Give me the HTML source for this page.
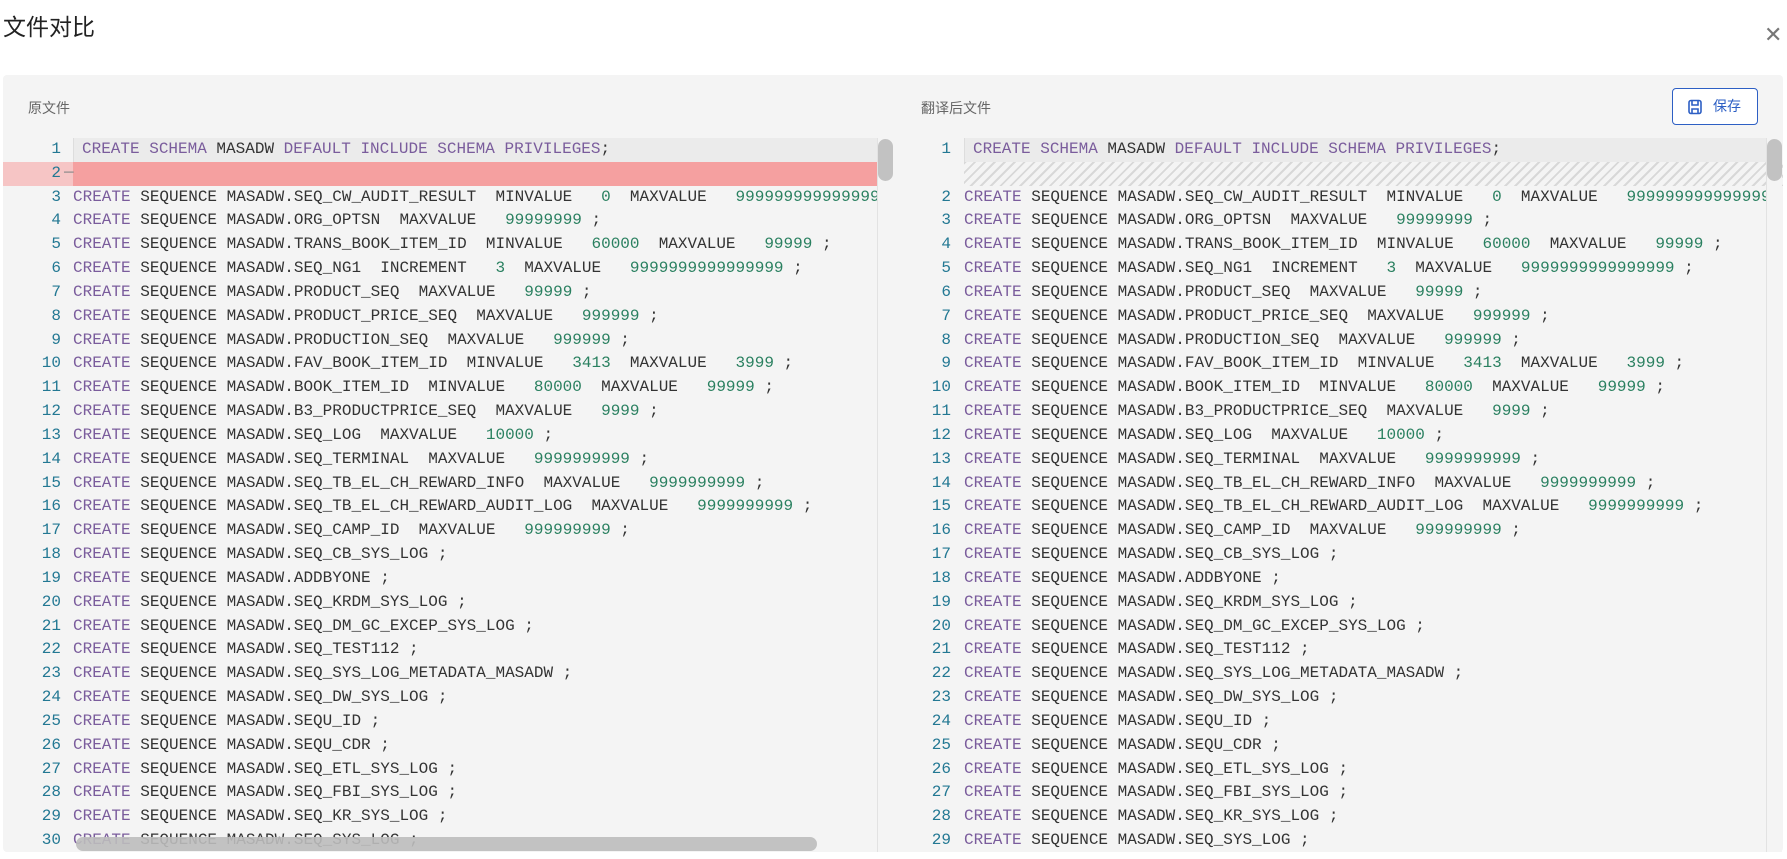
<!DOCTYPE html>
<html><head><meta charset="utf-8"><style>
*{margin:0;padding:0;box-sizing:border-box}
body{width:1787px;height:859px;background:#fff;position:relative;overflow:hidden;font-family:"Liberation Sans","Noto Sans CJK SC",sans-serif}
.title{position:absolute;left:3px;top:8px;font-size:23px;color:#222}
.close{position:absolute;left:1764px;top:22px;font-size:22px;color:#777}
.panel{position:absolute;left:3px;top:75px;width:1780px;height:777px;background:#f4f4f4;border-radius:4px}
.lbl{position:absolute;top:98px;font-size:14px;color:#666}
.btn{position:absolute;left:1672px;top:88px;width:86px;height:37px;border:1px solid #2d5fc4;border-radius:4px;color:#2d5fc4;font-size:14px;background:#fff;line-height:35px;padding-left:40px}
.ed{position:absolute;top:138px;overflow:hidden;height:714px}
.ln{position:absolute;height:23.83px;line-height:23.83px;font-family:"Liberation Mono",monospace;font-size:16px;white-space:pre;color:#333}
.n{position:absolute;width:40px;text-align:right;color:#237893}
.k{color:#7a5c9c}.g{color:#2a8060}
</style></head><body>
<div class="title">文件对比</div>
<div class="close">✕</div>
<div class="panel"></div>
<div class="lbl" style="left:28px">原文件</div>
<div class="lbl" style="left:921px">翻译后文件</div>
<div class="btn"><svg style="position:absolute;left:14px;top:10px" width="16" height="16" viewBox="0 0 16 16" fill="none" stroke="#2d5fc4" stroke-width="1.6"><rect x="2" y="1.5" width="12" height="13" rx="2"/><path d="M5 2v4h6V2M5 14v-4h6v4"/></svg>保存</div>
<div id="L" class="ed" style="left:3px;width:890px"></div>
<div id="R" class="ed" style="left:897px;width:886px"></div>
<script>
const rows=[
["MASADW.SEQ_CW_AUDIT_RESULT","MINVALUE","0","MAXVALUE","9999999999999999"],
["MASADW.ORG_OPTSN","MAXVALUE","99999999",";"],
["MASADW.TRANS_BOOK_ITEM_ID","MINVALUE","60000","MAXVALUE","99999",";"],
["MASADW.SEQ_NG1","INCREMENT","3","MAXVALUE","9999999999999999",";"],
["MASADW.PRODUCT_SEQ","MAXVALUE","99999",";"],
["MASADW.PRODUCT_PRICE_SEQ","MAXVALUE","999999",";"],
["MASADW.PRODUCTION_SEQ","MAXVALUE","999999",";"],
["MASADW.FAV_BOOK_ITEM_ID","MINVALUE","3413","MAXVALUE","3999",";"],
["MASADW.BOOK_ITEM_ID","MINVALUE","80000","MAXVALUE","99999",";"],
["MASADW.B3_PRODUCTPRICE_SEQ","MAXVALUE","9999",";"],
["MASADW.SEQ_LOG","MAXVALUE","10000",";"],
["MASADW.SEQ_TERMINAL","MAXVALUE","9999999999",";"],
["MASADW.SEQ_TB_EL_CH_REWARD_INFO","MAXVALUE","9999999999",";"],
["MASADW.SEQ_TB_EL_CH_REWARD_AUDIT_LOG","MAXVALUE","9999999999",";"],
["MASADW.SEQ_CAMP_ID","MAXVALUE","999999999",";"],
["MASADW.SEQ_CB_SYS_LOG",";"],["MASADW.ADDBYONE",";"],["MASADW.SEQ_KRDM_SYS_LOG",";"],
["MASADW.SEQ_DM_GC_EXCEP_SYS_LOG",";"],["MASADW.SEQ_TEST112",";"],["MASADW.SEQ_SYS_LOG_METADATA_MASADW",";"],
["MASADW.SEQ_DW_SYS_LOG",";"],["MASADW.SEQU_ID",";"],["MASADW.SEQU_CDR",";"],["MASADW.SEQ_ETL_SYS_LOG",";"],
["MASADW.SEQ_FBI_SYS_LOG",";"],["MASADW.SEQ_KR_SYS_LOG",";"],["MASADW.SEQ_SYS_LOG",";"]];
function fmt(r){let s='<span class="k">CREATE</span> SEQUENCE '+r[0];
for(let i=1;i<r.length;i++){let t=r[i];if(/^\d+$/.test(t))s+='   <span class="g">'+t+'</span>';else if(t==';')s+=' ;';else s+='  '+t;}
return s;}
const H=23.83;
function build(id,right){let el=document.getElementById(id),h='';
const nx=right?14:18, cx=right?67:70;
h+=`<div style="position:absolute;left:${cx}px;top:0;width:${right?803:804}px;height:${H}px;background:#ebebeb;border-left:1px solid #ddd"></div>`;
h+=`<div class="ln" style="top:0;left:0"><span class="n" style="left:${nx}px">1</span><span style="position:absolute;left:${cx+9}px"><span class="k">CREATE SCHEMA</span> MASADW <span class="k">DEFAULT INCLUDE SCHEMA PRIVILEGES</span>;</span></div>`;
if(!right){h+=`<div style="position:absolute;left:0;top:${H}px;width:890px;height:${H}px;background:#f5a0a0"></div><div style="position:absolute;left:0;top:${H}px;width:70px;height:${H}px;background:#f6c5c5"></div>`;
h+=`<div class="ln" style="top:${H}px"><span class="n" style="left:${nx}px">2</span><span style="position:absolute;left:61px;color:#888">─</span></div>`;}
else h+=`<div style="position:absolute;left:${cx}px;top:${H}px;width:820px;height:${H}px;background:repeating-linear-gradient(-45deg,#d8d8d8 0 2px,#f4f4f4 2px 7px)"></div>`;
rows.forEach((r,i)=>{const y=(i+2)*H;const n=right?i+2:i+3;
h+=`<div class="ln" style="top:${y}px"><span class="n" style="left:${nx}px">${n}</span><span style="position:absolute;left:${cx}px">${fmt(r)}</span></div>`;});
h+=`<div style="position:absolute;left:${right?869:874}px;top:0;width:16px;height:714px;border-left:1px solid #e2e2e2;background:#f4f4f4"></div>`;
h+=`<div style="position:absolute;left:${right?870:875}px;top:1px;width:15px;height:42px;background:#c2c2c2;border-radius:8px"></div>`;
if(!right)h+=`<div style="position:absolute;left:73px;top:699px;width:741px;height:14px;background:#bdbdbd;border-radius:7px;opacity:.9"></div>`;
el.innerHTML=h;}
build('L',false);build('R',true);
</script>
</body></html>
